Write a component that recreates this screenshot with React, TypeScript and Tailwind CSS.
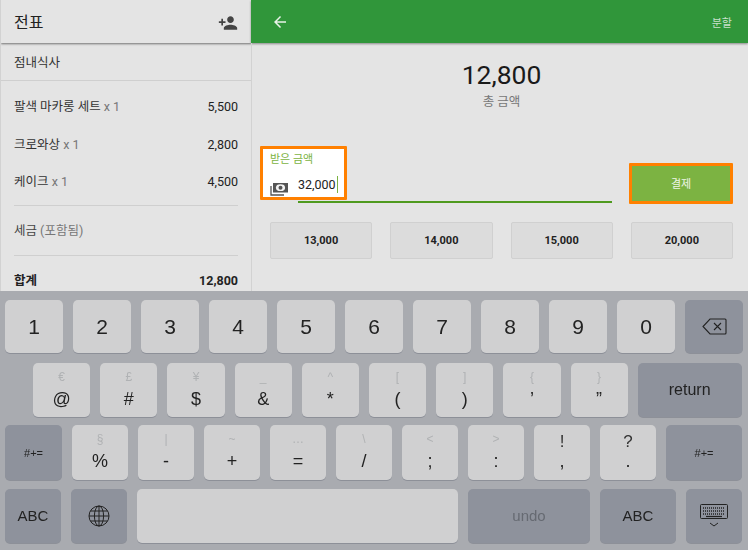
import { MdArrowBack, MdPersonAdd } from "react-icons/md";

type KeyDef = { main?: string; sub?: string; w: string; dark?: boolean; size?: string; icon?: React.ReactNode; muted?: boolean };

function Money() {
  return (
    <svg width="18" height="14" viewBox="0 0 18 14" fill="none" className="mt-[7px] shrink-0 text-[#555]">
      <path d="M1 4v9h13" stroke="currentColor" strokeWidth="1.3" />
      <rect x="3" y="1" width="15" height="9.5" fill="currentColor" />
      <ellipse cx="10.5" cy="5.7" rx="4.6" ry="3.4" fill="#f4f4f4" />
      <circle cx="10.5" cy="5.7" r="2" fill="currentColor" />
    </svg>
  );
}

function Backspace() {
  return (
    <svg width="25" height="17" viewBox="0 0 25 17" fill="none" stroke="#222" strokeWidth="1.1">
      <path d="M8 1h15a1 1 0 0 1 1 1v13a1 1 0 0 1-1 1H8L1 8.5z" />
      <path d="M12 5l7 7M19 5l-7 7" />
    </svg>
  );
}

function Globe() {
  return (
    <svg width="22" height="22" viewBox="0 0 22 22" fill="none" stroke="#222" strokeWidth="1">
      <circle cx="11" cy="11" r="10" />
      <ellipse cx="11" cy="11" rx="4.6" ry="10" />
      <path d="M11 1v20M1 11h20M2.5 6h17M2.5 16h17" />
    </svg>
  );
}

function KeyboardIcon() {
  return (
    <svg width="28" height="24" viewBox="0 0 28 24" fill="none" stroke="#222">
      <rect x="0.5" y="0.5" width="27" height="14" rx="1" strokeWidth="1" />
      <path d="M3 4h22M3 7h22" strokeWidth="1.4" strokeDasharray="1 1" />
      <path d="M3 10h22" strokeWidth="1.4" strokeDasharray="1 1" />
      <path d="M6 12.5h16" strokeWidth="1.2" />
      <path d="M10 19l4 3 4-3" strokeWidth="1" />
    </svg>
  );
}

const row1: KeyDef[] = [
  ..."1234567890".split("").map((c) => ({ main: c, w: "w-[58px]", size: "text-[21px]" })),
  { w: "w-[58px]", dark: true, icon: <Backspace /> },
];

const row2: KeyDef[] = [
  { main: "@", sub: "€", w: "w-[57.2px]" },
  { main: "#", sub: "£", w: "w-[57.2px]" },
  { main: "$", sub: "¥", w: "w-[57.2px]" },
  { main: "&", sub: "_", w: "w-[57.2px]" },
  { main: "*", sub: "^", w: "w-[57.2px]" },
  { main: "(", sub: "[", w: "w-[57.2px]" },
  { main: ")", sub: "]", w: "w-[57.2px]" },
  { main: "’", sub: "{", w: "w-[57.2px]" },
  { main: "”", sub: "}", w: "w-[57.2px]" },
  { main: "return", w: "w-[104px]", dark: true, size: "text-[16px]" },
];

const row3: KeyDef[] = [
  { main: "#+=", w: "w-[57px]", dark: true, size: "text-[11px]" },
  { main: "%", sub: "§", w: "w-[56px]" },
  { main: "-", sub: "|", w: "w-[56px]" },
  { main: "+", sub: "~", w: "w-[56px]" },
  { main: "=", sub: "…", w: "w-[56px]" },
  { main: "/", sub: "\\", w: "w-[56px]" },
  { main: ";", sub: "<", w: "w-[56px]" },
  { main: ":", sub: ">", w: "w-[56px]" },
  { main: ",", sub: "!", w: "w-[56px]" },
  { main: ".", sub: "?", w: "w-[56px]" },
  { main: "#+=", w: "w-[76px]", dark: true, size: "text-[11px]" },
];

const row4: KeyDef[] = [
  { main: "ABC", w: "w-[56px]", dark: true, size: "text-[15px]" },
  { w: "w-[56px]", dark: true, icon: <Globe /> },
  { w: "w-[321px]" },
  { main: "undo", w: "w-[122px]", dark: true, size: "text-[15px]", muted: true },
  { main: "ABC", w: "w-[76px]", dark: true, size: "text-[15px]" },
  { w: "w-[56px]", dark: true, icon: <KeyboardIcon /> },
];

function Key({ k }: { k: KeyDef }) {
  const strongSub = k.sub === "!" || k.sub === "?";
  return (
    <div
      className={`${k.w} h-full shrink-0 rounded-[5px] flex flex-col items-center justify-center shadow-[0_1px_0_#8d9098] ${
        k.dark ? "bg-[#8e929c]" : "bg-[#d0d0d1]"
      } ${k.muted ? "text-[#666a72]" : "text-[#222]"}`}
    >
      {k.icon}
      {k.sub && (
        <span className={`leading-none h-[16px] mb-[1px] ${strongSub ? "text-[17px] text-[#333]" : "text-[12px] text-[#b0b2b4]"}`}>
          {k.sub}
        </span>
      )}
      {k.main && <span className={`leading-[22px] ${k.size ?? "text-[18px]"}`}>{k.main}</span>}
    </div>
  );
}

function Row({ keys, cls }: { keys: KeyDef[]; cls: string }) {
  return <div className={`flex ${cls}`}>{keys.map((k, i) => <Key key={i} k={k} />)}</div>;
}

function Item({ name, qty, price }: { name: string; qty: string; price: string }) {
  return (
    <div className="flex h-[37.5px] items-center justify-between pt-[2px]">
      <span className="text-[#333]">
        {name} <span className="text-[#777]">{qty}</span>
      </span>
      <span className="text-[#222]">{price}</span>
    </div>
  );
}

export default function App() {
  return (
    <div className="relative h-[550px] w-[748px] overflow-hidden bg-[#e4e4e4] font-['Roboto','Noto_Sans_CJK_KR',sans-serif] text-[12.5px]">
      <div className="flex h-[291px]">
        {/* 전표 */}
        <div className="w-[251px] shrink-0 overflow-hidden border-l border-l-[#d2d2d2]">
          <div className="flex h-[43px] items-center justify-between pl-[13px] pr-[13px] pt-[2px] shadow-[0_1px_2px_rgba(0,0,0,0.5)]">
            <span className="text-[16px] text-[#222]">전표</span>
            <MdPersonAdd className="text-[20px] text-[#444]" />
          </div>
          <div className="mt-[2px] flex h-[36px] items-center border-b border-[#cfcfcf] pl-[13px] pt-[2px] text-[#333]">점내식사</div>
          <div className="px-[13px] pt-[7px]">
            <Item name="팔색 마카롱 세트" qty="x 1" price="5,500" />
            <Item name="크로와상" qty="x 1" price="2,800" />
            <Item name="케이크" qty="x 1" price="4,500" />
            <div className="mt-[4px] border-t border-[#cfcfcf]" />
            <div className="flex h-[49px] items-center pt-[2px] text-[#444]">
              세금&nbsp;<span className="text-[#777]">(포함됨)</span>
            </div>
            <div className="border-t border-[#cfcfcf]" />
            <div className="flex h-[50px] items-center justify-between pt-[2px] font-bold text-[#222]">
              <span>합계</span>
              <span>12,800</span>
            </div>
          </div>
        </div>

        {/* 결제 */}
        <div className="flex flex-1 min-w-0 flex-col">
          <div className="flex h-[43px] items-center justify-between bg-[#30963a] pl-[20px] pr-[16px] text-[#c9e0ca] shadow-[0_1px_2px_rgba(0,0,0,0.4)]">
            <MdArrowBack className="text-[18px] text-[#e8f2e8]" />
            <span className="pt-[5px] text-[11px]">분할</span>
          </div>
          <div className="flex-1 border-l border-l-[#d2d2d2]">
            <div className="flex flex-col items-center pl-[3px] pt-[15px]">
              <div className="text-[26.5px] leading-[34px] text-[#1a1a1a]">12,800</div>
              <div className="mt-[2px] text-[12.5px] leading-[16px] text-[#777]">총 금액</div>
            </div>
            <div className="mt-[36px] flex items-start gap-[17px] pl-[18px] pr-[15px]">
              <div className="relative h-[54px] flex-1">
                <div className="absolute left-[-10px] top-0 h-[54px] w-[87px] rounded-[1px] border-[3px] border-[#ff8000] bg-white" />
                <div className="relative pt-[7px] text-[11px] leading-[13px] text-[#7cb342]">받은 금액</div>
                <div className="relative mt-[9px] flex items-start">
                  <Money />
                  <span className="ml-[10px] mt-[1px] border-r border-r-[#7cb342] pr-[1px] text-[12.5px] leading-[17px] text-[#222]">32,000</span>
                </div>
                <div className="absolute bottom-[-3px] left-[28px] right-0 h-[2px] bg-[#4f9a1f]" />
              </div>
              <div className="mt-[17px] flex h-[41px] w-[104px] items-center justify-center rounded-[1px] border-[3px] border-[#ff8000] bg-[#7cb342] pt-[3px] text-[11px] text-[#eef5e6]">
                결제
              </div>
            </div>
            <div className="mt-[18px] flex gap-[18px] pl-[18px] pr-[15px]">
              {["13,000", "14,000", "15,000", "20,000"].map((v) => (
                <div key={v} className="flex h-[37px] flex-1 items-center justify-center rounded-[2px] border border-[#d0d0d0] bg-[#dcdcdc] pt-[2px] text-[11px] font-bold text-[#222]">
                  {v}
                </div>
              ))}
            </div>
          </div>
        </div>
      </div>

      {/* keyboard */}
      <div className="h-[259px] bg-[#a9abb0] pt-[9px] font-['Liberation_Sans',sans-serif] blur-[0.3px]">
        <Row keys={row1} cls="h-[53px] pl-[5px] gap-[10px]" />
        <Row keys={row2} cls="mt-[10px] h-[54px] pl-[33px] gap-[10px]" />
        <Row keys={row3} cls="mt-[8px] h-[55px] pl-[5px] gap-[10px]" />
        <Row keys={row4} cls="mt-[9px] h-[54px] pl-[5px] gap-[10px]" />
      </div>
    </div>
  );
}
